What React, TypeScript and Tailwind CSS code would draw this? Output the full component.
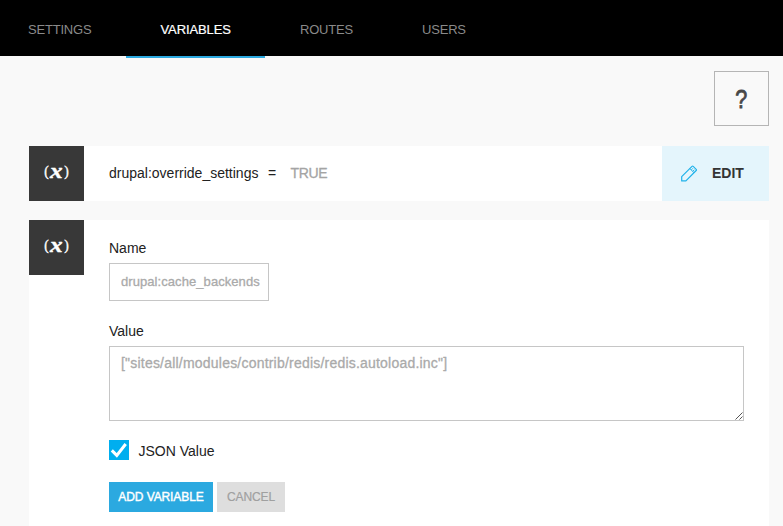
import React from "react";

const tabs = [
  { label: "SETTINGS", box: "w-[126px] pl-7 text-[#8a8a8a]" },
  {
    label: "VARIABLES",
    box: "w-[139px] pl-[34.5px] text-white border-b-2 border-[#2ba9e0] tracking-[-0.1px] [-webkit-text-stroke:0.2px_#fff]",
  },
  { label: "ROUTES", box: "w-[123px] pl-[35px] text-[#8a8a8a]" },
  { label: "USERS", box: "w-[120px] pl-[34px] text-[#8a8a8a]" },
];

function VariableBadge() {
  return (
    <div className="flex h-[55px] w-[55px] shrink-0 items-start justify-center bg-[#383838] pt-[14px] font-['Liberation_Serif',serif] text-white">
      <span className="mt-px inline-block scale-x-90 text-[15px] leading-5 [-webkit-text-stroke:0.4px_#fff]">(</span>
      <span className="inline-block scale-x-[1.2] px-[2px] text-[21px] leading-[22px] font-bold italic [-webkit-text-stroke:0.4px_#fff]">x</span>
      <span className="mt-px inline-block scale-x-90 text-[15px] leading-5 [-webkit-text-stroke:0.4px_#fff]">)</span>
    </div>
  );
}

function PencilIcon() {
  return (
    <svg width="17" height="17" viewBox="0 0 17 17" fill="none" stroke="#1fb2ea" strokeWidth="1.2" strokeLinejoin="round">
      <path d="M.7 15.9v-4.3L11 1.3q.6-.6 1.2 0l3 3q.6.6 0 1.2L4.9 15.9Z" />
      <path d="M8.9 3.6l4.2 4.2M10.4 4.8l1.5-1.5M11.9 6.2l1.5-1.5" strokeWidth="1" />
    </svg>
  );
}

export default function App() {
  return (
    <div className="h-[526px] w-[783px] overflow-hidden bg-[#f9f9f9] font-['Liberation_Sans',Arial,sans-serif] text-[14px] text-[#222]">
      <nav className="flex h-14 bg-black text-[13px] tracking-[-0.2px]">
        {tabs.map((tab) => (
          <a key={tab.label} className={`h-[58px] shrink-0 pt-[20px] leading-5 ${tab.box}`}>
            {tab.label}
          </a>
        ))}
      </nav>

      <main className="flex flex-col pr-[14px] pl-[29px]">
        <button className="mt-[15px] flex h-[55px] w-[55px] items-center justify-center self-end border border-[#b5b5b5] pt-px pr-px text-[26px] text-[#484848]">
          <span className="scale-x-[0.83] [-webkit-text-stroke:0.8px_#484848]">?</span>
        </button>

        <section className="mt-5 flex h-[55px] bg-white">
          <VariableBadge />
          <div className="flex grow items-center pl-[25px]">
            <span className="w-[159px]">drupal:override_settings</span>
            <span className="w-[22.5px]">=</span>
            <span className="tracking-[-0.3px] text-[#a4a4a4] [-webkit-text-stroke:0.3px_#a4a4a4]">TRUE</span>
          </div>
          <button className="flex w-[107px] items-center bg-[#e4f5fc] pl-[19px] font-bold text-[#333]">
            <PencilIcon />
            <span className="ml-[14px]">EDIT</span>
          </button>
        </section>

        <section className="mt-[19px] flex h-[306px] items-start bg-white">
          <VariableBadge />
          <form className="flex grow flex-col items-start pt-[18px] pr-[25px] pl-[25px]">
            <label className="leading-5">Name</label>
            <input
              className="mt-[5px] h-[38px] w-40 border border-[#c6c6c6] pr-0 pb-[1px] pl-[11px] text-[13px] tracking-[0.07px] text-[#aaa] outline-none [-webkit-text-stroke:0.3px_#aaa]"
              defaultValue="drupal:cache_backends"
            />
            <label className="mt-5 leading-5">Value</label>
            <div className="relative mt-[5px] h-[75px] w-full">
              <textarea
                className="block h-full w-full resize-none border border-[#c6c6c6] px-[11px] pt-[6px] leading-5 tracking-[0.21px] text-[#aaa] outline-none [-webkit-text-stroke:0.3px_#aaa]"
                defaultValue={'["sites/all/modules/contrib/redis/redis.autoload.inc"]'}
              />
              <svg className="absolute right-px bottom-px" width="8" height="8" viewBox="0 0 8 8" stroke="#555" strokeWidth="1">
                <path d="M.5 7.5l7-7M4.5 7.5l3-3" />
              </svg>
            </div>
            <label className="mt-[19px] flex h-5 items-center">
              <span className="flex h-5 w-5 items-center justify-center bg-[#00aeef]">
                <svg width="20" height="20" viewBox="0 0 20 20" fill="none" stroke="#fff" strokeWidth="3">
                  <path d="M2.8 10.4l5 5L16.7 4" />
                </svg>
              </span>
              <span className="mt-[3px] ml-[9.5px]">JSON Value</span>
            </label>
            <div className="mt-[22px] flex gap-1 text-[12px] tracking-[-0.1px]">
              <button type="button" className="h-[30px] w-[104px] whitespace-nowrap bg-[#2ba9e0] text-white [-webkit-text-stroke:0.4px_#fff]">
                ADD VARIABLE
              </button>
              <button type="button" className="h-[30px] w-[68px] bg-[#dedede] text-[#a0a0a0] [-webkit-text-stroke:0.2px_#a0a0a0]">
                CANCEL
              </button>
            </div>
          </form>
        </section>
      </main>
    </div>
  );
}
